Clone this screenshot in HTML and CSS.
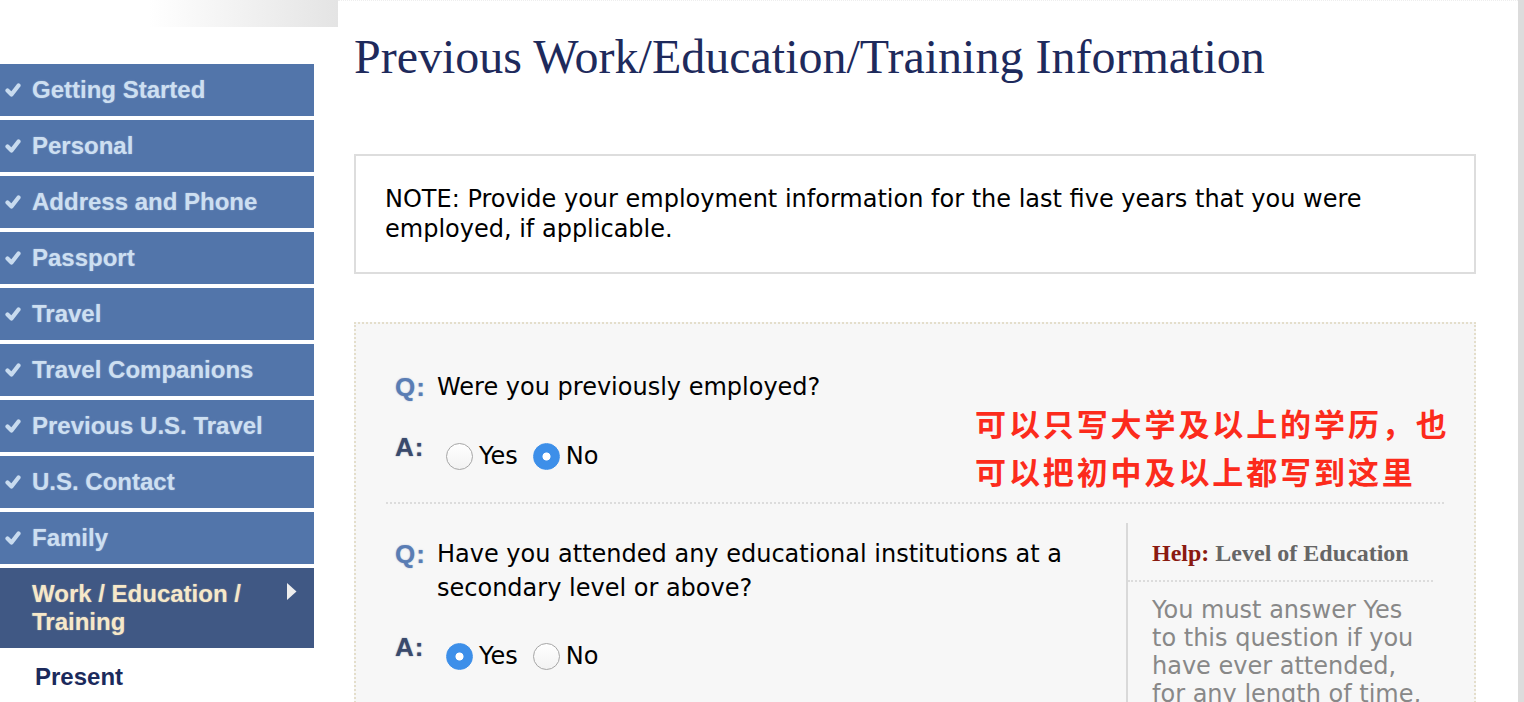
FILE: index.html
```html
<!DOCTYPE html>
<html lang="en">
<head>
<meta charset="utf-8">
<title>Previous Work/Education/Training Information</title>
<link rel="stylesheet" href="styles.css">
</head>
<body>
<div class="page">
  <aside class="sidebar">
    <div class="sb-top"></div>
    <nav class="steps">
      <a class="step done"><svg class="check" viewBox="0 0 16 14"><path d="M2.5 7.5 L6.5 11.5 L13.5 2.5"/></svg><span>Getting Started</span></a>
      <a class="step done"><svg class="check" viewBox="0 0 16 14"><path d="M2.5 7.5 L6.5 11.5 L13.5 2.5"/></svg><span>Personal</span></a>
      <a class="step done"><svg class="check" viewBox="0 0 16 14"><path d="M2.5 7.5 L6.5 11.5 L13.5 2.5"/></svg><span>Address and Phone</span></a>
      <a class="step done"><svg class="check" viewBox="0 0 16 14"><path d="M2.5 7.5 L6.5 11.5 L13.5 2.5"/></svg><span>Passport</span></a>
      <a class="step done"><svg class="check" viewBox="0 0 16 14"><path d="M2.5 7.5 L6.5 11.5 L13.5 2.5"/></svg><span>Travel</span></a>
      <a class="step done"><svg class="check" viewBox="0 0 16 14"><path d="M2.5 7.5 L6.5 11.5 L13.5 2.5"/></svg><span>Travel Companions</span></a>
      <a class="step done"><svg class="check" viewBox="0 0 16 14"><path d="M2.5 7.5 L6.5 11.5 L13.5 2.5"/></svg><span>Previous U.S. Travel</span></a>
      <a class="step done"><svg class="check" viewBox="0 0 16 14"><path d="M2.5 7.5 L6.5 11.5 L13.5 2.5"/></svg><span>U.S. Contact</span></a>
      <a class="step done"><svg class="check" viewBox="0 0 16 14"><path d="M2.5 7.5 L6.5 11.5 L13.5 2.5"/></svg><span>Family</span></a>
      <a class="step current"><span class="step-label">Work / Education / Training</span><svg class="arrow" viewBox="0 0 10 17"><polygon points="0,0 9.5,8.5 0,17"/></svg></a>
      <a class="substep">Present</a>
    </nav>
  </aside>

  <main class="main">
    <h1 class="title">Previous Work/Education/Training Information</h1>

    <div class="note">NOTE: Provide your employment information for the last five years that you were employed, if applicable.</div>

    <section class="panel">
      <div class="qblock first">
        <div class="q-row">
          <span class="q-label">Q:</span>
          <span class="q-text">Were you previously employed?</span>
        </div>
        <div class="a-row">
          <span class="a-label">A:</span>
          <div class="options">
            <label class="opt"><input class="radio" type="radio" name="employed"><span>Yes</span></label>
            <label class="opt"><input class="radio" type="radio" name="employed" checked><span>No</span></label>
          </div>
        </div>
      </div>

      <div class="qsplit">
        <div class="qblock second">
          <div class="q-row">
            <span class="q-label">Q:</span>
            <span class="q-text">Have you attended any educational institutions at a secondary level or above?</span>
          </div>
          <div class="a-row">
            <span class="a-label">A:</span>
            <div class="options">
              <label class="opt"><input class="radio" type="radio" name="educated" checked><span>Yes</span></label>
              <label class="opt"><input class="radio" type="radio" name="educated"><span>No</span></label>
            </div>
          </div>
        </div>
        <aside class="help">
          <div class="help-head"><span class="help-key">Help:</span> Level of Education</div>
          <p class="help-text">You must answer Yes to this question if you have ever attended, for any length of time, a secondary school or above.</p>
        </aside>
      </div>

      <div class="annotation">可以只写大学及以上的学历，也<br>可以把初中及以上都写到这里</div>
    </section>
  </main>

  <div class="scroll-track"></div>
</div>
</body>
</html>
```

FILE: styles.css
```css
html, body {
  margin: 0;
  padding: 0;
  overflow: hidden;
  background: #ffffff;
}

.page {
  display: flex;
  min-height: 100vh;
}

/* ---------- sidebar ---------- */
.sidebar {
  width: 338px;
  flex-shrink: 0;
}

.sb-top {
  height: 27px;
  background: linear-gradient(to right, #ffffff 0%, #ffffff 44%, #e4e4e4 100%);
}

.steps {
  width: 314px;
  margin-top: 37px;
  display: flex;
  flex-direction: column;
  font-family: "Liberation Sans", Arial, sans-serif;
  font-weight: 700;
  font-size: 24px;
}

.step {
  display: flex;
  align-items: center;
  height: 52px;
  margin-bottom: 4px;
  padding-left: 5px;
  background: #5275aa;
  color: #cddff1;
  text-shadow: 0 0 1.5px rgba(205, 223, 241, 0.55);
  text-decoration: none;
  box-sizing: border-box;
}

.check {
  width: 16px;
  height: 14px;
  margin-right: 11px;
  flex-shrink: 0;
  filter: blur(0.5px);
}

.check path {
  fill: none;
  stroke: #c8dbef;
  stroke-width: 4.2;
  stroke-linecap: round;
  stroke-linejoin: round;
}

.step.current {
  height: auto;
  align-items: flex-start;
  padding: 12px 0 12px 32px;
  background: #405884;
  color: #f6e8c9;
  text-shadow: 0 0 1.5px rgba(246, 232, 201, 0.5);
  line-height: 28px;
}

.step-label {
  flex: 1;
}

.arrow {
  width: 10px;
  height: 17px;
  margin: 3px 17px 0 8px;
  flex-shrink: 0;
}

.arrow polygon {
  fill: #eeeeee;
}

.substep {
  margin-top: 10px;
  padding-left: 35px;
  line-height: 30px;
  color: #1b2a5c;
  text-decoration: none;
}

/* ---------- main ---------- */
.main {
  flex: 1;
  padding: 0 42px 0 16px;
  min-width: 0;
  border-top: 1px dotted #eeeeee;
  font-family: "DejaVu Sans", Verdana, sans-serif;
  font-size: 24px;
}

.title {
  margin: 28px 0 0;
  font-family: "Liberation Serif", "Times New Roman", serif;
  font-weight: 400;
  font-size: 48px;
  line-height: 56px;
  color: #1e2a5c;
}

.note {
  margin-top: 69px;
  border: 2px solid #dddddd;
  padding: 28px 29px 28px 29px;
  line-height: 30px;
  color: #000000;
}

.panel {
  position: relative;
  margin-top: 48px;
  border: 2px dotted #e4decb;
  background: #f7f7f7;
  padding: 46px 30px 40px;
}

.qblock.first {
  padding-bottom: 29px;
  border-bottom: 2px dotted #dcdcdc;
}

.q-row,
.a-row {
  display: grid;
  grid-template-columns: 42px 1fr;
  align-items: start;
  padding-left: 9px;
}

.q-row {
  line-height: 34px;
}

.a-row {
  margin-top: 30px;
}

.qblock.second .a-row {
  margin-top: 29px;
}

.q-label,
.a-label {
  font-family: "Liberation Sans", Arial, sans-serif;
  font-weight: 700;
  font-size: 26px;
  letter-spacing: 1px;
}

.q-label {
  line-height: 34px;
  color: #5a7db4;
  text-shadow: 0 0 1.5px rgba(90, 125, 180, 0.6);
}

.a-label {
  line-height: 26px;
  color: #3a4a6c;
  text-shadow: 0 0 1.5px rgba(58, 74, 108, 0.6);
}

.q-text {
  color: #000000;
}

.options {
  display: flex;
  align-items: center;
  height: 34px;
  margin-top: 5px;
  line-height: 34px;
}

.opt {
  display: flex;
  align-items: center;
  margin-left: 9px;
  margin-right: 6px;
}

.opt + .opt {
  margin-left: 9px;
}

.radio {
  appearance: none;
  -webkit-appearance: none;
  width: 27px;
  height: 27px;
  margin: 0 6px 0 0;
  border-radius: 50%;
  border: 1px solid #a6a6a6;
  background: linear-gradient(#ffffff, #f2f2f2);
  box-sizing: border-box;
}

.radio:checked {
  border-color: #3d8fe9;
  background: radial-gradient(circle, #ffffff 0, #ffffff 3.6px, #3d8fe9 4.4px);
}

.qsplit {
  display: flex;
  padding-top: 19px;
}

.qblock.second {
  flex: 1;
  padding-top: 14px;
  min-width: 0;
}

.help {
  width: 281px;
  flex-shrink: 0;
  margin-right: 11px;
  border-left: 2px solid #d9d9d9;
  padding: 15px 0 0 24px;
}

.help-head {
  margin-left: -24px;
  padding: 0 0 12px 24px;
  border-bottom: 2px dotted #dcdcdc;
  font-family: "Liberation Serif", "Times New Roman", serif;
  font-weight: 700;
  font-size: 24px;
  line-height: 30px;
  color: #666666;
}

.help-key {
  color: #8a1a10;
}

.help-text {
  margin: 14px 0 0;
  line-height: 28px;
  color: #888888;
}

.annotation {
  position: absolute;
  left: 619px;
  top: 75px;
  font-family: "Noto Sans CJK SC", sans-serif;
  font-weight: 700;
  font-size: 31px;
  line-height: 48px;
  letter-spacing: 2.9px;
  color: #fc2b1c;
  white-space: nowrap;
}

.scroll-track {
  width: 6px;
  flex-shrink: 0;
  background: #dcdcdc;
}
```
